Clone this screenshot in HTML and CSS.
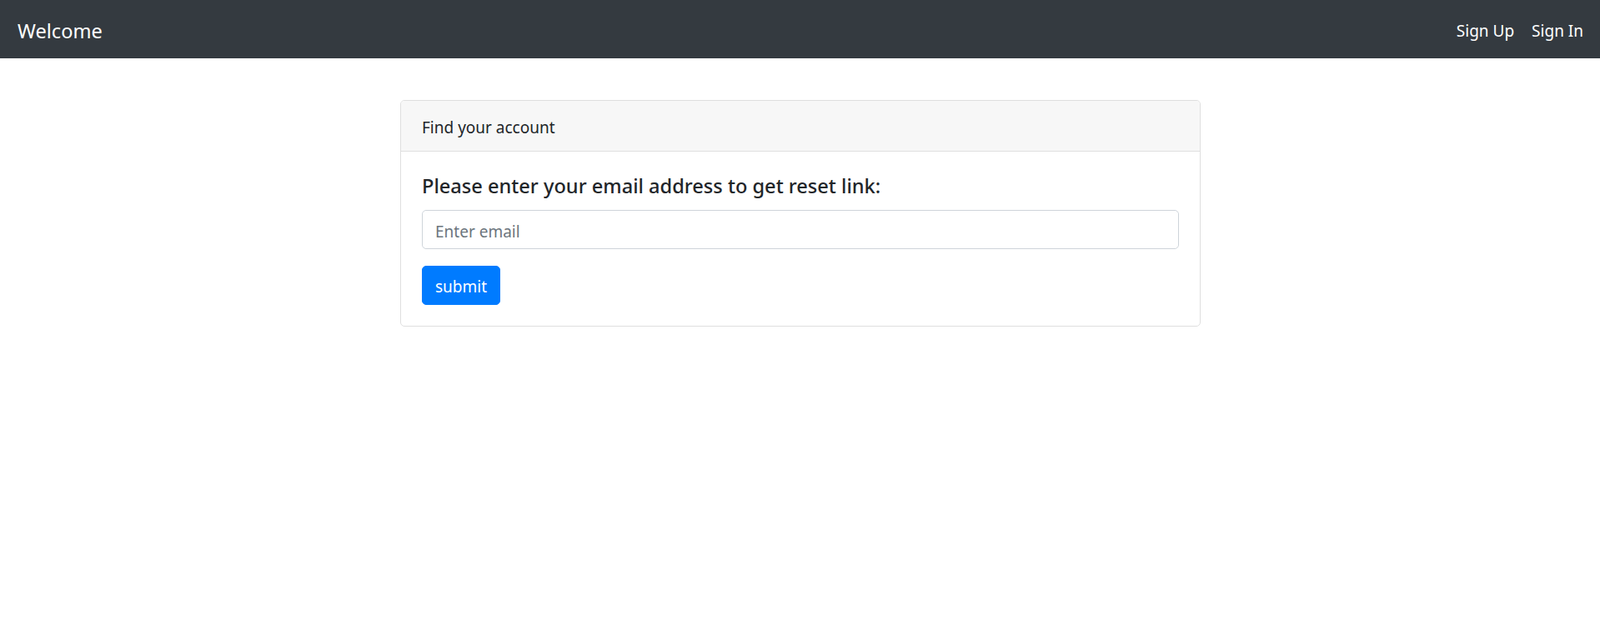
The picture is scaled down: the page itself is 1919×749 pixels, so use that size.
FILE: index.html
```html
<!DOCTYPE html>
<html lang="en">
<head>
<meta charset="utf-8">
<title>Find your account</title>
<link rel="stylesheet" href="styles.css">
</head>
<body>
<nav class="navbar">
  <a class="brand" href="#">Welcome</a>
  <div class="nav-links">
    <a class="nav-link" href="#">Sign Up</a>
    <a class="nav-link" href="#">Sign In</a>
  </div>
</nav>
<main class="page">
  <div class="card">
    <div class="card-header">Find your account</div>
    <div class="card-body">
      <form class="form">
        <h5 class="title">Please enter your email address to get reset link:</h5>
        <div class="form-group">
          <input class="form-control" type="email" placeholder="Enter email">
        </div>
        <button class="btn" type="button">submit</button>
      </form>
    </div>
  </div>
</main>
</body>
</html>
```
FILE: styles.css
```css
* { box-sizing: border-box; }
html, body { margin: 0; padding: 0; }
body {
  font-family: "Noto Sans", "Open Sans", sans-serif;
  font-size: 19px;
  line-height: 30px;
  color: #212529;
  background: #fff;
}
.navbar {
  height: 70px;
  background: #343a40;
  display: flex;
  align-items: center;
  justify-content: space-between;
  padding: 3px 20px 0 21px;
}
.brand {
  color: #fff;
  text-decoration: none;
  font-size: 23.6px;
}
.nav-links {
  display: flex;
  gap: 21px;
}
.nav-link {
  color: #fff;
  text-decoration: none;
  font-size: 19px;
}
.page {
  padding-top: 50px;
  padding-left: 480px;
}
.card {
  width: 960px;
  border: 1px solid #dfdfdf;
  border-radius: 5px;
  overflow: hidden;
}
.card-header {
  background: #f7f7f7;
  border-bottom: 1px solid #dfdfdf;
  padding: 17px 25px 13px;
  height: 61px;
  font-size: 19px;
  line-height: 30px;
}
.card-body {
  padding: 25px;
}
.title {
  margin: 0 0 15px;
  padding-top: 2px;
  font-size: 23.6px;
  line-height: 28px;
  font-weight: 500;
}
.form-group {
  margin-bottom: 20px;
}
.form-control {
  display: block;
  width: 100%;
  height: 47px;
  padding: 9px 15px 5px;
  font-family: inherit;
  font-size: 19px;
  color: #495057;
  border: 1px solid #ced4da;
  border-radius: 5px;
  background: #fff;
}
.form-control::placeholder { color: #6c757d; }
.btn {
  display: block;
  height: 47px;
  padding: 3px 15px 0;
  font-family: inherit;
  font-size: 19px;
  color: #fff;
  background: #007bff;
  border: 1px solid #007bff;
  border-radius: 5px;
}
```
